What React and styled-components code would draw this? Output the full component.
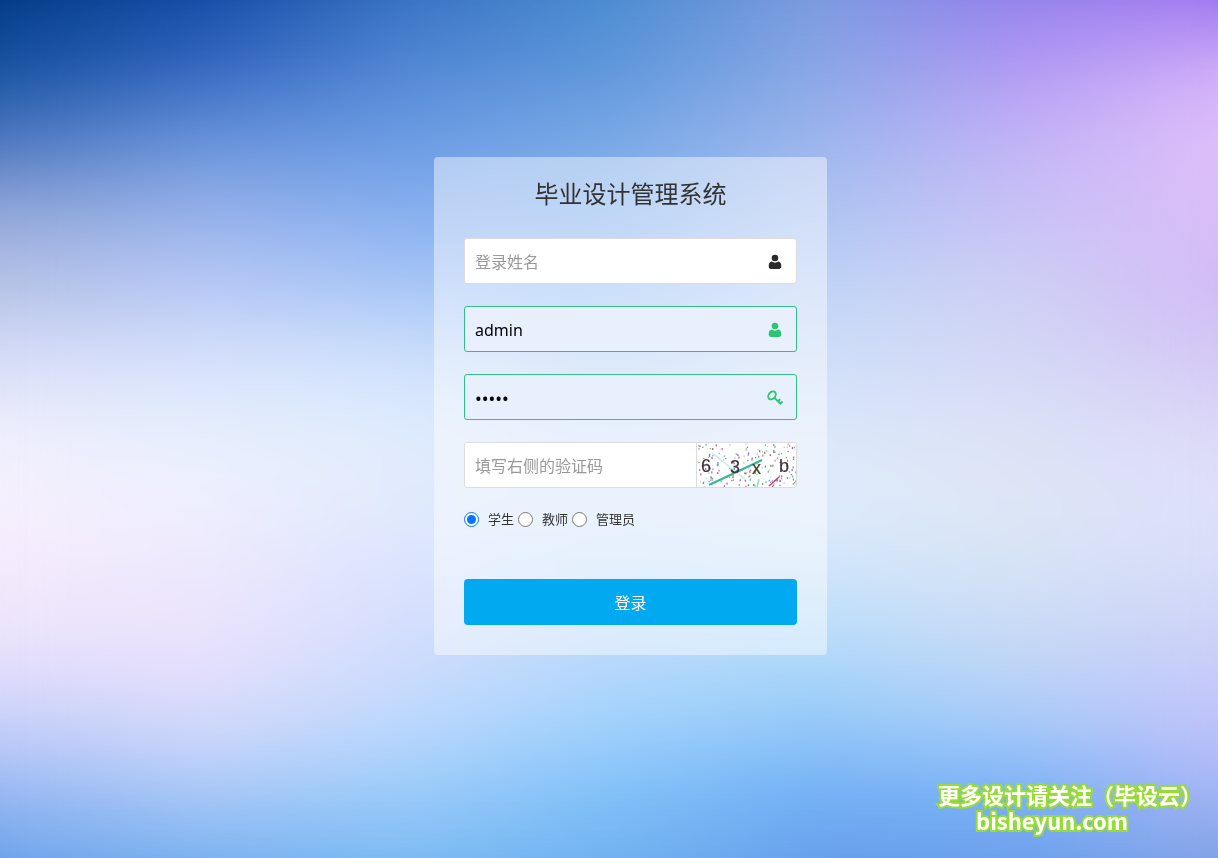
import React, { useState } from 'react';
import styled, { createGlobalStyle, css } from 'styled-components';

// Styled Components
const GlobalStyle = createGlobalStyle`
  * {
    box-sizing: border-box;
  }

  body {
    margin: 0;
    color: #333;
    font-family: 'Noto Sans', 'Noto Sans CJK SC', sans-serif;
    font-size: 16px;
  }
`;

const Page = styled.div`
  position: relative;
  isolation: isolate;
  min-height: 100vh;
  display: flex;
  flex-direction: column;
  align-items: center;
  padding: 157px 0 32px 43px;
`;

const Backdrop = styled.div`
  position: absolute;
  inset: 0;
  z-index: -1;
  display: grid;
  overflow: hidden;
`;

// Each band fades in over the one before it, so the rows melt into each other
const Band = styled.div`
  grid-area: 1 / 1;
  background: linear-gradient(to right, ${({ $colors }) => $colors.join(', ')});
  ${({ $from, $to }) =>
    $to > 0 &&
    css`
      mask-image: linear-gradient(to bottom, transparent ${$from}%, #000 ${$to}%);
    `}
`;

// Softens the seams between the bands
const Haze = styled.div`
  grid-area: 1 / 1;
  backdrop-filter: blur(28px);
`;

const LoginCard = styled.form`
  width: 100%;
  max-width: 393px;
  display: flex;
  flex-direction: column;
  gap: 22px;
  padding: 19px 30px 30px;
  border-radius: 4px;
  background-color: rgba(255, 255, 255, 0.45);
`;

const Title = styled.h1`
  margin: 0 0 4px;
  font-size: 24px;
  font-weight: 400;
  line-height: 36px;
  text-align: center;
`;

const Field = styled.label`
  display: flex;
  align-items: center;
  height: 46px;
  overflow: hidden;
  border: 1px solid ${({ $filled }) => ($filled ? '#35bd87' : '#dcdcdc')};
  border-radius: 3px;
  background-color: ${({ $filled }) => ($filled ? '#e8f0fe' : '#fff')};
  color: ${({ $filled }) => ($filled ? '#2dc573' : '#2b2b2b')};
`;

const TextInput = styled.input`
  flex: 1;
  min-width: 0;
  height: 100%;
  padding: 2px 10px 0;
  border: none;
  outline: none;
  background: transparent;
  color: #000;
  font: inherit;

  &[type='password'] {
    font-size: 18px;
  }

  &::placeholder {
    color: #999;
    opacity: 1;
  }
`;

const FieldIcon = styled.svg`
  flex: none;
  width: 16px;
  height: 16px;
  margin: 2px 13px 0 0;
`;

const CaptchaButton = styled.button`
  flex: none;
  width: 100px;
  height: 100%;
  padding: 0;
  border: none;
  border-left: 1px solid #dcdcdc;
  background: #fff;
  cursor: pointer;

  svg {
    display: block;
  }
`;

const RoleGroup = styled.div`
  display: flex;
  align-items: center;
  gap: 4px;
  height: 19px;
`;

const RoleLabel = styled.label`
  display: flex;
  align-items: center;
  gap: 9px;
  font-size: 13px;
  line-height: 19px;
`;

const Radio = styled.input`
  width: 15px;
  height: 15px;
  margin: 0;
`;

const SubmitButton = styled.button`
  height: 46px;
  margin-top: 28px;
  border: none;
  border-radius: 4px;
  background-color: #00a9f0;
  color: #fff;
  font: inherit;
  cursor: pointer;
`;

const Promo = styled.div`
  position: absolute;
  right: 16px;
  bottom: 25px;
  color: #fff;
  font-family: 'Noto Sans CJK SC', sans-serif;
  font-size: 22px;
  font-weight: 700;
  line-height: 26px;
  paint-order: stroke fill;
  -webkit-text-stroke: 4px #97dc34;
`;

const PromoSite = styled.div`
  padding-left: 38px;
`;

// Backdrop colours, top to bottom, evenly spaced
const bands = [
  ['#023a84', '#144aa4', '#3770c0', '#4a8bd0', '#7a9ade', '#9280ec', '#9f76f0'],
  ['#1a55a2', '#386ac4', '#558ad6', '#6098dc', '#8aa8e6', '#b49cf4', '#d2b0f8'],
  ['#5078c0', '#6a94da', '#6c9ce4', '#7aaae6', '#9cb6ed', '#c2b4f6', '#dfbffa'],
  ['#94a8d8', '#98b2ea', '#88b0f0', '#88b4f0', '#aec5f2', '#c8c2f6', '#dabdf8'],
  ['#b6c3e6', '#b8c8f6', '#a8c6f6', '#9cc4f5', '#c0d4f6', '#ced0f4', '#d2bbf6'],
  ['#d6dcf7', '#d6e1fb', '#cfe1fc', '#bdd5f7', '#cfdff8', '#d4d8f6', '#d4c8f5'],
  ['#eeeefc', '#e6effd', '#e0ecfd', '#d4e3fa', '#dbe7fa', '#dce2f6', '#dcd8f8'],
  ['#f6f0fe', '#efeffe', '#e2ebfd', '#dae8fb', '#e0ecfb', '#dee6f6', '#dfe0fa'],
  ['#f4eafc', '#ede8fd', '#dbe3fe', '#cee4fc', '#cfe5fa', '#d6e3f5', '#d6dcf9'],
  ['#e9e2fb', '#ebe2fc', '#d2ddfd', '#bcd9fb', '#b5dbfb', '#c6d8f6', '#ccd0f8'],
  ['#ccd2fa', '#d7dafb', '#c0d9fd', '#a5d4fc', '#98ccf8', '#accdf8', '#c2c4fb'],
  ['#9dbaf3', '#b0cbf8', '#9fcefa', '#84c2fa', '#76b3f7', '#7eb4f8', '#a8b6f5'],
  ['#6ba2ea', '#74aeee', '#78b8f2', '#6eb0ee', '#669eea', '#6a9eea', '#80a2e6'],
];

const bandStop = (index) => (index / (bands.length - 1)) * 100;

const roles = [
  { value: 'student', label: '学生' },
  { value: 'teacher', label: '教师' },
  { value: 'admin', label: '管理员' },
];

const noiseColors = ['#5ca878', '#d0608a', '#7a8cd0', '#b08a5c', '#5cc8aa', '#b86060', '#9a6ac0', '#a8dcd4', '#e0b0cc'];

// Small repeatable generator for the noise of the captcha
const makeNoise = (count) => {
  let seed = 1729;
  const next = () => {
    seed = (seed * 16807) % 2147483647;
    return seed / 2147483647;
  };
  return Array.from({ length: count }, () => ({
    x: next() * 99,
    y: next() * 44,
    long: next() > 0.5,
    color: noiseColors[Math.floor(next() * noiseColors.length)],
  }));
};

const noise = makeNoise(180);

const UserIcon = () => (
  <FieldIcon viewBox="0 0 16 16" fill="currentColor" aria-hidden="true">
    <circle cx="8" cy="4" r="3.3" />
    <path d="M4.7 7.6C2.6 7.8 1.7 9.6 1.7 12.3C1.7 14 2.6 15 4 15H12C13.4 15 14.3 14 14.3 12.3C14.3 9.6 13.4 7.8 11.3 7.6C9.4 9 6.6 9 4.7 7.6Z" />
  </FieldIcon>
);

const KeyIcon = () => (
  <FieldIcon viewBox="0 0 16 16" fill="none" stroke="currentColor" strokeWidth="1.9" aria-hidden="true">
    <ellipse cx="5" cy="5.4" rx="4.4" ry="3.3" transform="rotate(-50 5 5.4)" />
    <path d="M7.4 7.8L14 14.2M13.2 9.2L10.8 11.6M15.6 11.4L13.2 13.8" />
  </FieldIcon>
);

const CaptchaImage = () => (
  <svg width="99" height="44" viewBox="0 0 99 44" role="img" aria-label="验证码">
    {noise.map(({ x, y, long, color }, index) => (
      <rect key={index} x={x} y={y} width="1.3" height={long ? 2 : 1.3} fill={color} />
    ))}
    <path d="M15 10L48 36" stroke="#c4efe6" strokeWidth="1.5" />
    <path d="M12 42L65 17" stroke="#35b893" strokeWidth="2" />
    <path d="M62 36L60 44" stroke="#8fe0d0" strokeWidth="1.5" />
    <path d="M72 43L82 34" stroke="#b84a7c" strokeWidth="1.5" />
    <g fontFamily="Liberation Sans, sans-serif" fontSize="18" fill="#41323c" stroke="#41323c" strokeWidth="0.2">
      <text x="4" y="29">6</text>
      <text x="33" y="30">3</text>
      <text x="55" y="31" fill="#3c4a1c">x</text>
      <text x="82" y="29">b</text>
    </g>
  </svg>
);

// Main Component
const App = () => {
  const [name, setName] = useState('');
  const [account, setAccount] = useState('admin');
  const [password, setPassword] = useState('admin');
  const [captcha, setCaptcha] = useState('');
  const [role, setRole] = useState('student');

  const handleSubmit = (e) => {
    e.preventDefault();
  };

  return (
    <Page>
      <GlobalStyle />
      <Backdrop aria-hidden="true">
        {bands.map((colors, index) => (
          <Band key={index} $colors={colors} $from={bandStop(index - 1)} $to={bandStop(index)} />
        ))}
        <Haze />
      </Backdrop>
      <LoginCard onSubmit={handleSubmit}>
        <Title>毕业设计管理系统</Title>
        <Field>
          <TextInput
            type="text"
            aria-label="登录姓名"
            placeholder="登录姓名"
            value={name}
            onChange={(e) => setName(e.target.value)}
          />
          <UserIcon />
        </Field>
        <Field $filled>
          <TextInput
            type="text"
            aria-label="用户名"
            value={account}
            onChange={(e) => setAccount(e.target.value)}
          />
          <UserIcon />
        </Field>
        <Field $filled>
          <TextInput
            type="password"
            aria-label="密码"
            value={password}
            onChange={(e) => setPassword(e.target.value)}
          />
          <KeyIcon />
        </Field>
        <Field>
          <TextInput
            type="text"
            aria-label="验证码"
            placeholder="填写右侧的验证码"
            value={captcha}
            onChange={(e) => setCaptcha(e.target.value)}
          />
          <CaptchaButton type="button">
            <CaptchaImage />
          </CaptchaButton>
        </Field>
        <RoleGroup role="radiogroup">
          {roles.map(({ value, label }) => (
            <RoleLabel key={value}>
              <Radio
                type="radio"
                name="role"
                value={value}
                checked={role === value}
                onChange={() => setRole(value)}
              />
              {label}
            </RoleLabel>
          ))}
        </RoleGroup>
        <SubmitButton type="submit">登录</SubmitButton>
      </LoginCard>
      <Promo>
        <div>更多设计请关注（毕设云）</div>
        <PromoSite>bisheyun.com</PromoSite>
      </Promo>
    </Page>
  );
};

export default App;
